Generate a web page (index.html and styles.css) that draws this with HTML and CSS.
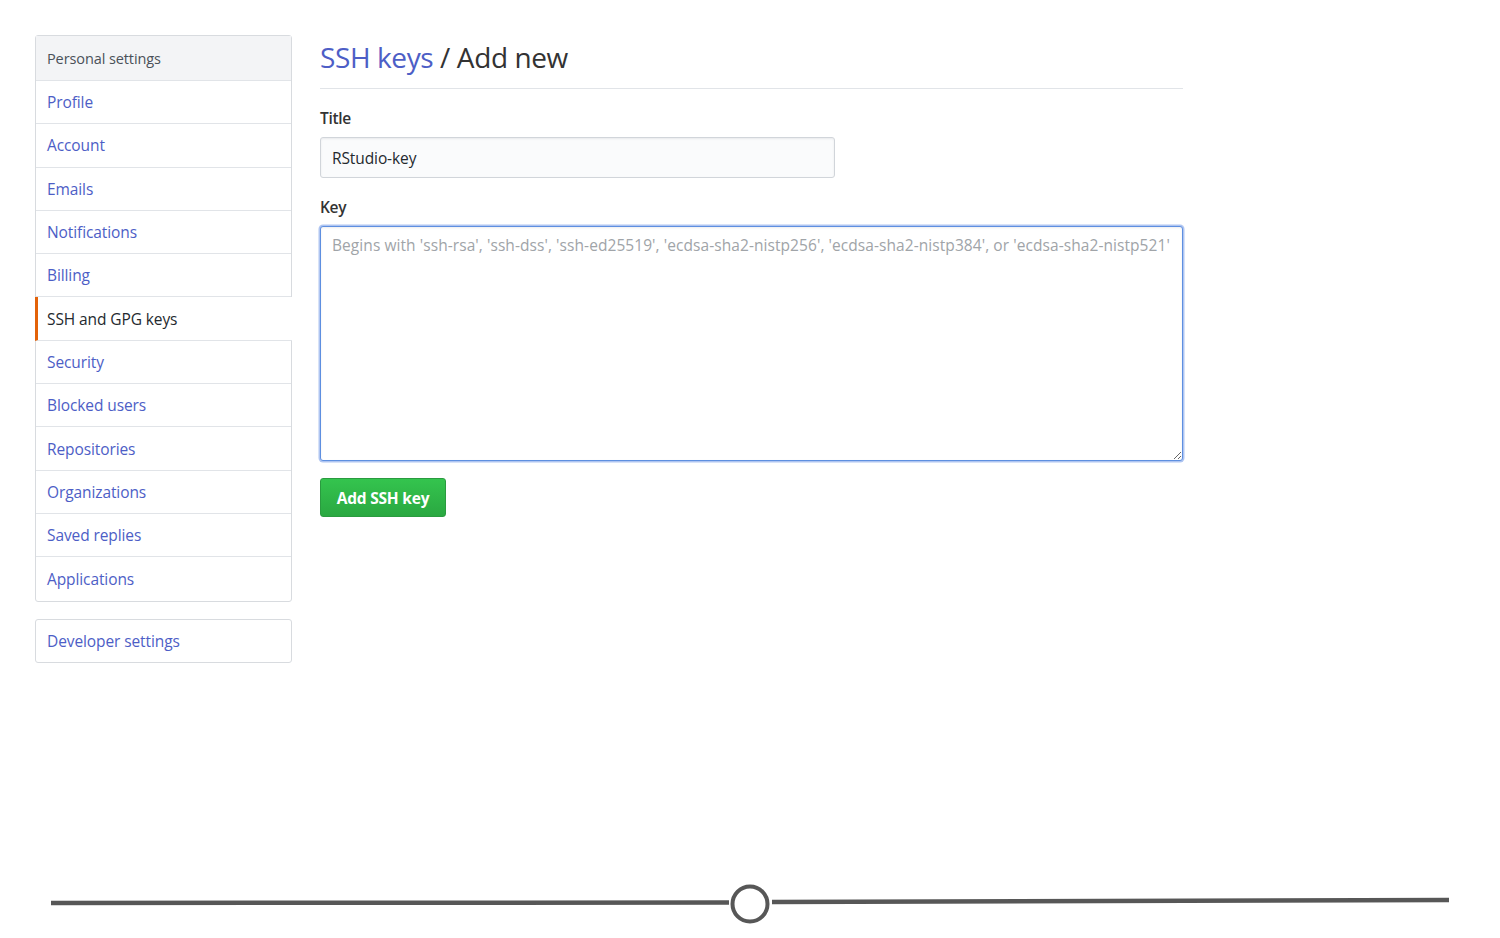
FILE: index.html
```html
<!DOCTYPE html>
<html lang="en">
<head>
<meta charset="utf-8">
<title>SSH keys / Add new</title>
<link rel="stylesheet" href="styles.css">
</head>
<body>
<div class="page">
  <aside class="sidebar">
    <nav class="menu">
      <div class="menu-heading">Personal settings</div>
      <a class="menu-item" href="#">Profile</a>
      <a class="menu-item" href="#">Account</a>
      <a class="menu-item" href="#">Emails</a>
      <a class="menu-item" href="#">Notifications</a>
      <a class="menu-item" href="#">Billing</a>
      <a class="menu-item selected" href="#">SSH and GPG keys</a>
      <a class="menu-item" href="#">Security</a>
      <a class="menu-item" href="#">Blocked users</a>
      <a class="menu-item" href="#">Repositories</a>
      <a class="menu-item" href="#">Organizations</a>
      <a class="menu-item" href="#">Saved replies</a>
      <a class="menu-item last" href="#">Applications</a>
    </nav>
    <nav class="menu dev">
      <a class="menu-item last" href="#">Developer settings</a>
    </nav>
  </aside>
  <main class="content">
    <h2 class="subhead"><a href="#" class="crumb">SSH keys</a> / Add new</h2>
    <form class="form">
      <label class="label" for="title">Title</label>
      <input class="input" id="title" type="text" value="RStudio-key">
      <label class="label key-label" for="key">Key</label>
      <textarea class="textarea" id="key" placeholder="Begins with 'ssh-rsa', 'ssh-dss', 'ssh-ed25519', 'ecdsa-sha2-nistp256', 'ecdsa-sha2-nistp384', or 'ecdsa-sha2-nistp521'"></textarea>
      <div class="actions"><button type="button" class="btn">Add SSH key</button></div>
    </form>
  </main>
</div>
<svg class="scrubber" width="1500" height="60" viewBox="0 0 1500 60">
  <line x1="51" y1="23" x2="729" y2="22.5" stroke="#575757" stroke-width="4.5"/>
  <line x1="772" y1="22" x2="1449" y2="20" stroke="#575757" stroke-width="4.5"/>
  <circle cx="750" cy="24" r="17.5" fill="none" stroke="#575757" stroke-width="4"/>
</svg>
</body>
</html>
```
FILE: styles.css
```css
* { box-sizing: border-box; }
html, body { margin: 0; padding: 0; background: #fff; }
body {
  font-family: "Open Sans", "Noto Sans", sans-serif;
  font-size: 15.5px;
  color: #24292e;
}
.page {
  display: flex;
  align-items: flex-start;
  padding: 35px 0 0 35px;
  height: 880px;
}
.sidebar { width: 257px; flex: none; }
.menu {
  display: flex;
  flex-direction: column;
  border: 1px solid #d8dbdf;
  border-radius: 3px;
  background: #fff;
}
.menu-heading {
  height: 45px;
  display: flex;
  align-items: center;
  padding: 0 11px;
  background: #f3f4f6;
  border-bottom: 1px solid #e1e4e8;
  font-size: 14.5px;
  color: #4a5159;
  letter-spacing: -0.1px;
}
.menu-item {
  height: 43.3px;
  display: flex;
  align-items: center;
  padding: 0 11px;
  border-bottom: 1px solid #e1e4e8;
  color: #4d5ec6;
  text-decoration: none;
  font-size: 15.5px;
  letter-spacing: -0.1px;
}
.menu-item.last { border-bottom: 0; }
.menu-item.selected {
  color: #24292e;
  border-left: 3px solid #e36209;
  padding-left: 9px;
  margin-left: -1px;
  margin-right: -1px;
  background: #fff;
  position: relative;
}
.menu.dev { margin-top: 17px; }
.menu.dev .menu-item { height: 42px; }

.content { width: 863px; margin-left: 28px; }
.subhead {
  margin: 0;
  font-weight: 400;
  font-size: 28px;
  letter-spacing: -0.4px;
  line-height: 40px;
  padding-top: 2px;
  padding-bottom: 11px;
  border-bottom: 1px solid #e1e4e8;
  color: #333;
}
.crumb { color: #4d5ec6; text-decoration: none; }
.form { display: flex; flex-direction: column; align-items: flex-start; }
.label {
  font-weight: 600;
  font-size: 15.5px;
  letter-spacing: -0.3px;
  margin-top: 18px;
  line-height: 22px;
  margin-bottom: 8px;
  color: #333;
}
.key-label { margin-top: 18px; }
.input {
  width: 515px;
  height: 41px;
  padding: 0 11px;
  font: inherit;
  font-size: 15.5px;
  letter-spacing: -0.1px;
  color: #24292e;
  background: #fafbfc;
  border: 1px solid #d1d5da;
  border-radius: 3px;
  box-shadow: inset 0 1px 2px rgba(27,31,35,0.075);
}
.textarea {
  width: 863px;
  height: 235px;
  padding: 8px 11px;
  font: inherit;
  font-size: 15.5px;
  letter-spacing: 0.07px;
  line-height: 20px;
  background: #fff;
  border: 1px solid #5e8fe0;
  border-radius: 3px;
  box-shadow: 0 0 0 1.5px rgba(110,150,230,0.55), inset 0 1px 2px rgba(27,31,35,0.075);
  outline: none;
  resize: vertical;
}
.textarea::placeholder { color: #a0a4a8; }
.actions { margin-top: 17px; }
.btn {
  width: 126px;
  height: 39px;
  font: inherit;
  font-weight: 700;
  font-size: 15.5px;
  letter-spacing: -0.2px;
  color: #fff;
  background: linear-gradient(#34c44e, #2aa841);
  border: 1px solid #2a9b3f;
  border-radius: 3px;
  cursor: pointer;
}
.scrubber { display: block; }
```
